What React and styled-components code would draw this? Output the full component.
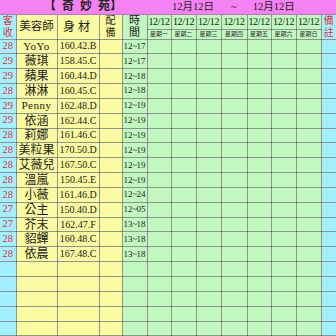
import styled, { createGlobalStyle } from "styled-components";

const GlobalStyle = createGlobalStyle`
  html, body {
    margin: 0;
    padding: 0;
    background: #ffffff;
  }
  body {
    font-family: "Liberation Serif", "Noto Sans CJK TC", serif;
  }
`;

const PINK = "#f482f2";
const CYAN = "#a2f0ff";
const YELLOW = "#fafaa0";
const GREEN = "#c0f8c0";
const LINE = "rgba(50, 60, 50, 0.55)";

const colWidths = [16, 41, 42, 23, 25, 24, 25, 25, 26, 24, 25, 25, 15];
const days = ["一", "二", "三", "四", "五", "六", "日"];

const girls = [
  ["28", "YoYo", "160.42.B", "12~17"],
  ["29", "薇琪", "158.45.C", "12~17"],
  ["29", "蘋果", "160.44.D", "12~18"],
  ["28", "淋淋", "160.45.C", "12~18"],
  ["29", "Penny", "162.48.D", "12~19"],
  ["29", "依涵", "162.44.C", "12~19"],
  ["28", "莉娜", "161.46.C", "12~19"],
  ["28", "美粒果", "170.50.D", "12~19"],
  ["28", "艾薇兒", "167.50.C", "12~19"],
  ["28", "溫嵐", "150.45.E", "12~19"],
  ["28", "小薇", "161.46.D", "12~24"],
  ["27", "公主", "150.40.D", "12~05"],
  ["27", "芥末", "162.47.F", "13~18"],
  ["28", "貂蟬", "160.48.C", "13~18"],
  ["28", "依晨", "167.48.C", "13~18"],
];

const EMPTY_ROWS = 5;

const Sheet = styled.table`
  width: 336px;
  table-layout: fixed;
  border-collapse: collapse;
  border-spacing: 0;
`;

const TitleRow = styled.tr`
  height: 14px;
  background: ${PINK};
  border-bottom: 1px solid ${LINE};
`;

const TitleCell = styled.td`
  padding: 0;
  height: 13px;
  color: #222;
  overflow: hidden;
`;

const ShopName = styled.div`
  display: flex;
  padding-left: 44px;
  font-size: 12px;
  line-height: 13px;
  font-weight: 700;
`;

const Glyph = styled.span`
  display: block;
  width: 12px;
  margin-right: ${(p) => p.$after ?? 6}px;
  text-align: center;
`;

const DateRange = styled.div`
  display: flex;
  align-items: center;
  padding-left: 1px;
  font-size: 10.5px;
  line-height: 13px;
  white-space: nowrap;
  & > span:nth-child(2) {
    margin: 0 16px 0 17px;
  }
`;

const HeadRow = styled.tr`
  height: ${(p) => p.$h}px;
`;

const Cell = styled.td`
  padding: 0;
  border: 1px solid ${LINE};
  border-top: none;
  background: ${(p) => p.$bg};
  color: ${(p) => p.$color || "#1a1a1a"};
  font-size: ${(p) => p.$size || 11}px;
  line-height: 1;
  text-align: center;
  vertical-align: middle;
  white-space: nowrap;
  overflow: hidden;
  letter-spacing: ${(p) => p.$spacing || 0}px;
  &:first-child {
    border-left: none;
  }
  &:last-child {
    border-right: none;
  }
`;

const Fit = styled.span`
  display: flex;
  justify-content: center;
`;

const Tilde = styled.span`
  display: inline-block;
  width: 4px;
  text-align: center;
  overflow: visible;
`;

const Stack = styled.span`
  display: flex;
  flex-direction: column;
  align-items: center;
  gap: ${(p) => p.$gap || 1}px;
  line-height: 1;
`;

const DayLabel = styled.span`
  display: block;
  font-size: 6px;
  line-height: 9px;
  color: #333;
`;

const DataRow = styled.tr`
  height: 14.85px;
`;

export default function App() {
  return (
    <>
      <GlobalStyle />
      <Sheet>
        <colgroup>
          {colWidths.map((w, i) => (
            <col key={i} style={{ width: w }} />
          ))}
        </colgroup>
        <tbody>
          <TitleRow>
            <TitleCell colSpan={6}>
              <ShopName>
                <Glyph>【</Glyph>
                <Glyph>奇</Glyph>
                <Glyph>妙</Glyph>
                <Glyph $after={0}>苑</Glyph>
                <Glyph>】</Glyph>
              </ShopName>
            </TitleCell>
            <TitleCell colSpan={7}>
              <DateRange>
                <span>12月12日</span>
                <span>~</span>
                <span>12月12日</span>
              </DateRange>
            </TitleCell>
          </TitleRow>

          <HeadRow $h={15}>
            <Cell rowSpan={2} $bg={CYAN} $color="#e0303a" $size={10}>
              <Stack $gap={2}>
                <span>客</span>
                <span>收</span>
              </Stack>
            </Cell>
            <Cell rowSpan={2} $bg={YELLOW} $size={11.5}>
              美容師
            </Cell>
            <Cell rowSpan={2} $bg={YELLOW} $size={12} $spacing={3}>
              身材
            </Cell>
            <Cell rowSpan={2} $bg={YELLOW} $size={10}>
              <Stack $gap={2}>
                <span>配</span>
                <span>備</span>
              </Stack>
            </Cell>
            <Cell rowSpan={2} $bg={GREEN} $size={11}>
              <Stack $gap={1}>
                <span>時</span>
                <span>間</span>
              </Stack>
            </Cell>
            {days.map((d) => (
              <Cell key={d} $bg={GREEN} $size={10} $spacing={-0.3}>
                <Fit>12/12</Fit>
              </Cell>
            ))}
            <Cell rowSpan={2} $bg={CYAN} $color="#e0303a" $size={10}>
              <Stack $gap={2}>
                <span>備</span>
                <span>註</span>
              </Stack>
            </Cell>
          </HeadRow>
          <HeadRow $h={10}>
            {days.map((d) => (
              <Cell key={d} $bg={GREEN}>
                <DayLabel>星期{d}</DayLabel>
              </Cell>
            ))}
          </HeadRow>

          {girls.map(([age, name, body, time]) => {
            const [from, to] = time.split("~");
            return (
              <DataRow key={name}>
                <Cell $bg={CYAN} $color="#e0303a" $size={10.5}>
                  {age}
                </Cell>
                <Cell
                  $bg={YELLOW}
                  $size={name.length > 3 ? 11 : 12}
                  $spacing={name.length > 3 ? 0.5 : 0}
                >
                  {name}
                </Cell>
                <Cell $bg={YELLOW} $size={10}>
                  <Fit>{body}</Fit>
                </Cell>
                <Cell $bg={YELLOW} />
                <Cell $bg={GREEN} $size={9}>
                  <Fit>
                    {from}
                    <Tilde>~</Tilde>
                    {to}
                  </Fit>
                </Cell>
                {days.map((d) => (
                  <Cell key={d} $bg={GREEN} />
                ))}
                <Cell $bg={CYAN} />
              </DataRow>
            );
          })}

          {Array.from({ length: EMPTY_ROWS }).map((_, r) => (
            <DataRow key={`empty-${r}`}>
              <Cell $bg={CYAN} />
              <Cell $bg={YELLOW} />
              <Cell $bg={YELLOW} />
              <Cell $bg={YELLOW} />
              <Cell $bg={GREEN} />
              {days.map((d) => (
                <Cell key={d} $bg={GREEN} />
              ))}
              <Cell $bg={CYAN} />
            </DataRow>
          ))}
        </tbody>
      </Sheet>
    </>
  );
}
